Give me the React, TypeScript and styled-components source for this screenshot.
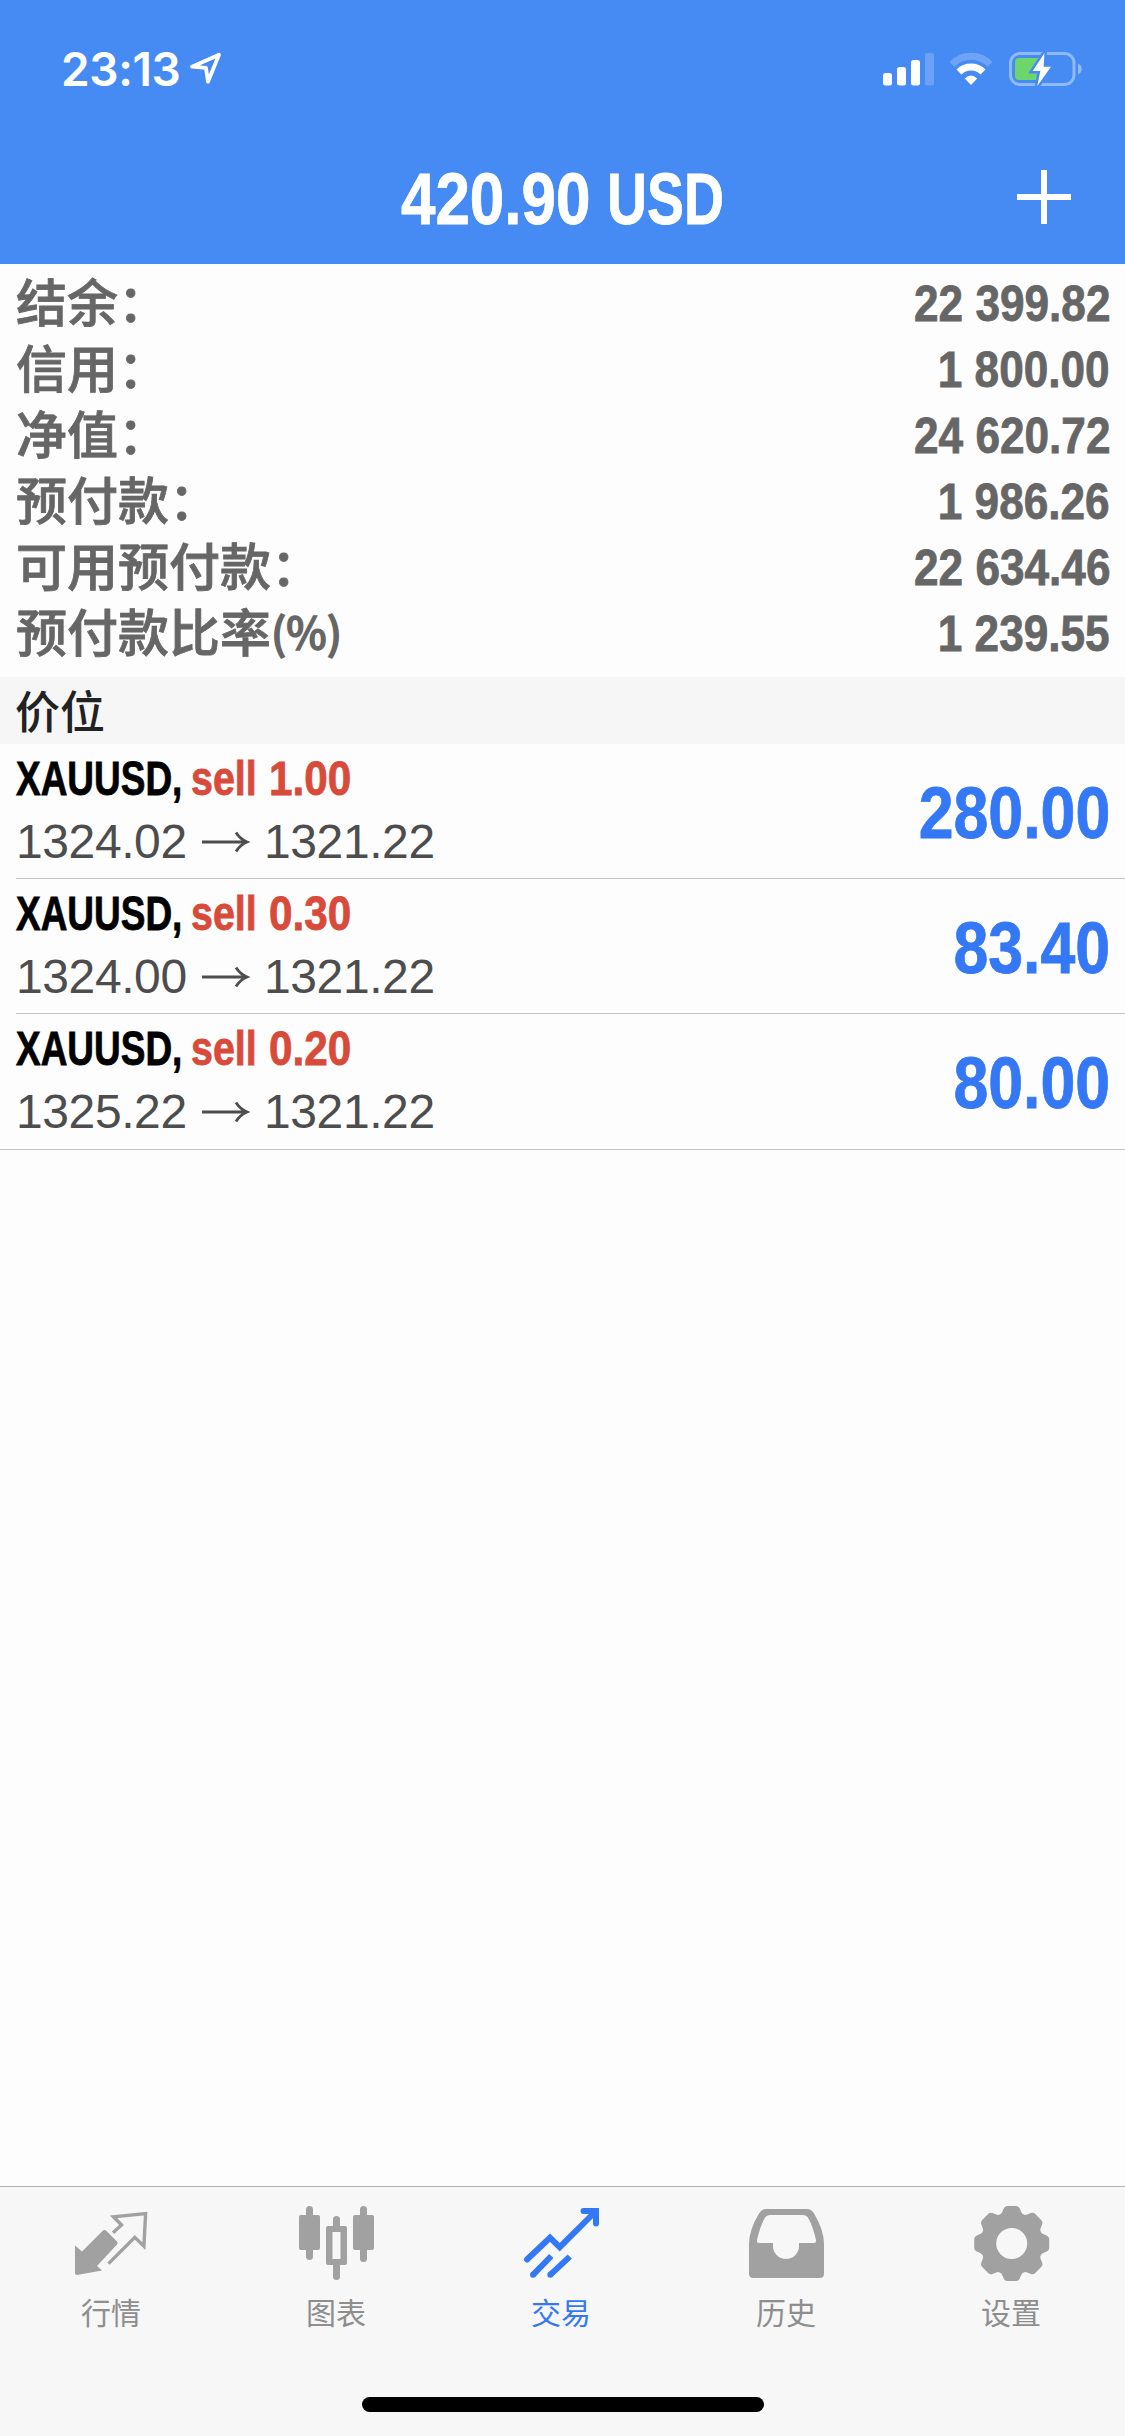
import React from "react";
import styled, { createGlobalStyle } from "styled-components";

const GlobalStyle = createGlobalStyle`
  * { box-sizing: border-box; }
  body { margin: 0; background: #fdfdfd; }
  svg { display: block; overflow: visible; flex: none; }
`;

const BLUE = "#3478f6";
const HEADER = "#468bf4";
const LATIN = `"Liberation Sans", "Noto Sans CJK SC", sans-serif`;
const CJK = `"Noto Sans CJK SC", "Liberation Sans", sans-serif`;

const Screen = styled.div`
  width: 1125px;
  height: 2436px;
  display: flex;
  flex-direction: column;
  background: #fdfdfd;
  font-family: ${LATIN};
`;

const Header = styled.header`
  height: 264px;
  background: ${HEADER};
  color: #fff;
`;

const StatusBar = styled.div`
  height: 132px;
  padding: 6px 43px 0 61px;
  display: flex;
  align-items: center;
  justify-content: space-between;
`;

const StatusGroup = styled.div<{ $gap: number }>`
  display: flex;
  align-items: center;
  gap: ${(p) => p.$gap}px;
`;

const Clock = styled.span`
  font: 600 46px/60px Inter, sans-serif;
  letter-spacing: -0.4px;
`;

const NavBar = styled.div`
  height: 132px;
  padding: 0 54px;
  display: grid;
  grid-template-columns: 1fr auto 1fr;
  align-items: center;
`;

const Title = styled.h1`
  grid-column: 2;
  margin: 0;
  padding-top: 2px;
  display: flex;
  font-size: 72px;
  line-height: 80px;
  font-weight: 700;
`;

const AddButton = styled.button`
  justify-self: end;
  padding: 0 0 2px;
  border: 0;
  background: none;
`;

/* Bold text squeezed to a condensed cut; the box takes the squeezed width. */
const Condensed = styled.span<{ $scale: number; $width: number; $color?: string }>`
  display: inline-block;
  width: ${(p) => p.$width}px;
  white-space: nowrap;
  font-weight: 700;
  -webkit-text-stroke: 0.8px currentColor;
  color: ${(p) => p.$color ?? "inherit"};
  transform: scaleX(${(p) => p.$scale});
  transform-origin: left center;
`;

const CondensedEnd = styled.span<{ $scale: number }>`
  display: inline-block;
  white-space: nowrap;
  font-weight: 700;
  -webkit-text-stroke: 0.8px currentColor;
  transform: scaleX(${(p) => p.$scale});
  transform-origin: right center;
`;

const Summary = styled.section`
  padding: 6px 15px 11px 16px;
  color: #666;
`;

const SummaryRow = styled.div`
  height: 66px;
  display: flex;
  align-items: flex-start;
  justify-content: space-between;
  font-size: 50px;
  line-height: 68px;
`;

const SummaryLabel = styled.span`
  display: flex;
  align-items: flex-start;
  font: 500 51px/60px ${CJK};
  -webkit-text-stroke: 0.8px currentColor;
`;

const Unit = styled.span`
  font-size: 43px;
  -webkit-text-stroke: 1.4px currentColor;
`;

const SectionTitle = styled.h2`
  margin: 0;
  height: 67px;
  padding-left: 15px;
  background: #f6f6f6;
  color: #222;
  font: 500 45px/65px ${CJK};
`;

const List = styled.div`
  height: 406px;
  border-bottom: 1px solid #c2c2c6;
`;

const Position = styled.div<{ $last: boolean }>`
  height: 135px;
  margin-left: 16px;
  padding-right: 15px;
  display: flex;
  align-items: center;
  justify-content: space-between;
  border-bottom: 1px solid ${(p) => (p.$last ? "transparent" : "#c2c2c6")};
`;

const Details = styled.div`
  padding-bottom: 3px;
  display: flex;
  flex-direction: column;
`;

const Symbol = styled.div`
  height: 63px;
  display: flex;
  font-size: 48px;
  line-height: 63px;
  color: #000;
`;

const Prices = styled.div`
  height: 63px;
  display: flex;
  align-items: center;
  font-size: 48px;
  line-height: 63px;
  letter-spacing: -0.4px;
  color: #4d4d4d;
`;

const Price = styled.span`
  width: 186px;
  white-space: nowrap;
`;

const ArrowSlot = styled.span`
  width: 62px;
  padding-top: 2px;
`;

const Profit = styled.div`
  padding-top: 4px;
  font-size: 72px;
  line-height: 80px;
  color: ${BLUE};
`;

const Spacer = styled.div`
  flex: 1;
`;

const Footer = styled.footer`
  height: 250px;
  border-top: 1px solid #b0b0b0;
  background: #f7f7f7;
  display: flex;
  flex-direction: column;
  align-items: center;
  justify-content: space-between;
  padding-bottom: 24px;
`;

const Tabs = styled.nav`
  width: 100%;
  display: grid;
  grid-template-columns: repeat(5, 1fr);
`;

const Tab = styled.div<{ $active?: boolean }>`
  padding-top: 19px;
  display: flex;
  flex-direction: column;
  align-items: center;
  color: ${(p) => (p.$active ? BLUE : "#a1a1a1")};
`;

const TabLabel = styled.span<{ $active?: boolean }>`
  margin-top: 8px;
  padding-right: 3px;
  color: ${(p) => (p.$active ? BLUE : "#8e8e8e")};
  font: 400 30px/44px ${CJK};
`;

const HomeIndicator = styled.div`
  width: 402px;
  height: 15px;
  border-radius: 8px;
  background: #000;
`;

const LocationIcon = () => (
  <svg width="32" height="32" viewBox="0 0 32 32">
    <path d="M29 1.700 2 13.700l14 1.200 2 13.800z" fill="none" stroke="#fff" strokeWidth="3.800" strokeLinejoin="round" />
  </svg>
);

const SignalIcon = () => (
  <svg width="51" height="33" viewBox="0 0 51 33" fill="#fff">
    <rect x="0" y="20" width="9" height="12.5" rx="2.5" />
    <rect x="14" y="14" width="9" height="18.5" rx="2.5" />
    <rect x="28" y="7" width="9" height="25.5" rx="2.5" />
    <rect x="42" y="0" width="9" height="32.5" rx="2.5" opacity="0.2" />
  </svg>
);

const WifiIcon = () => (
  <svg width="45" height="34" viewBox="0 0 45 34" fill="none" stroke="#fff" strokeWidth="7">
    <path d="M3 12.3A26.5 26.5 0 0 1 41 12.3" opacity="0.22" />
    <path d="M10 20A17 17 0 0 1 34 20" />
    <path d="M15.8 26.4Q22 20.6 28.2 26.4L22 33z" fill="#fff" stroke="none" />
  </svg>
);

const BatteryIcon = () => (
  <svg width="73" height="34" viewBox="0 0 73 34">
    <rect x="1.5" y="1.5" width="63.5" height="31" rx="9.5" fill="none" stroke="#fff" strokeOpacity="0.4" strokeWidth="3" />
    <path d="M69 11.5c5 2 5 9 0 11z" fill="#fff" opacity="0.4" />
    <path d="M10 6H31V28H10a4 4 0 0 1-4-4V10a4 4 0 0 1 4-4z" fill="#6cd66b" />
    <path
      d="M35.5 1 23.7 19h7.6L28.3 34 42 14.8H34.6z"
      fill="#fff"
      stroke={HEADER}
      strokeWidth="5"
      paintOrder="stroke"
    />
  </svg>
);

const PlusIcon = () => (
  <svg width="54" height="54" viewBox="0 0 54 54" fill="#fff">
    <rect x="24" width="6" height="54" />
    <rect y="24" width="54" height="6" />
  </svg>
);

const RightArrow = () => (
  <svg width="46" height="22" viewBox="0 0 46 22" fill="none" stroke="#4d4d4d" strokeWidth="2.800">
    <path d="M0 11H44M34 1.5Q38 8 45 11Q38 14 34 20.5" />
  </svg>
);

const QuotesIcon = () => (
  <svg width="75" height="75" viewBox="0 0 75 75">
    <path
      d="M0 39.6 7 45.4 27.5 25Q29.5 23 31.5 25L42 35.5Q43.3 37 42 38.6L22 60 27 64.6 2 69Q0 69 0 67z"
      fill="currentColor"
    />
    <path
      d="M38 26.8 46.5 19 38.5 10.8 70.6 7.6 68.9 40.2 59.8 31.3 33.5 57.6"
      fill="none"
      stroke="currentColor"
      strokeWidth="3.4"
    />
  </svg>
);

const ChartsIcon = () => (
  <svg width="75" height="75" viewBox="0 0 75 75" fill="currentColor">
    <rect x="6" y="0" width="7" height="54" rx="3.5" />
    <rect x="-1" y="9" width="21" height="35" rx="2" />
    <rect x="60" y="0" width="7" height="56" rx="3.5" />
    <rect x="53" y="9" width="21" height="35" rx="2" />
    <path d="M33 21V13.500a3.500 3.500 0 0 1 7 0V21z" />
    <path d="M33 58V70.500a3.500 3.500 0 0 0 7 0V58z" />
    <path fillRule="evenodd" d="M28 20H45a2 2 0 0 1 2 2V57a2 2 0 0 1-2 2H28a2 2 0 0 1-2-2V22a2 2 0 0 1 2-2zM32.5 26V53H40.5V26z" />
  </svg>
);

const TradeIcon = () => (
  <svg width="75" height="75" viewBox="0 0 75 75" fill="none" stroke="currentColor" strokeWidth="6">
    <path d="M2 53.5 25 31.7 34.7 41.2 70 6" strokeLinecap="round" />
    <path d="M58.5 5H71V17.5" strokeLinecap="round" />
    <path d="M26.3 50 8 68.8M44.8 50.6 25.3 68.8" />
    <circle cx="8" cy="68.8" r="3" fill="currentColor" stroke="none" />
    <circle cx="25.3" cy="68.8" r="3" fill="currentColor" stroke="none" />
  </svg>
);

const HistoryIcon = () => (
  <svg width="75" height="75" viewBox="0 0 75 75" fill="currentColor">
    <path
      fillRule="evenodd"
      d="M16 3H57Q61.500 3 64 7.500Q74 24 74 38V67.500Q74 72 69.500 72H3.500Q-1 72-1 67.500V38Q-1 24 9 7.500Q11.500 3 16 3zM20.500 9Q16.500 9 14.700 12.200Q10 20.500 7 34Q6.500 37 9 37H23V40a13 13 0 0 0 26 0V37H64Q66.500 37 66 34Q63 20.500 58.300 12.200Q56.500 9 52.500 9z"
    />
  </svg>
);

const TEETH = [0, 45, 90, 135, 180, 225, 270, 315];

const SettingsIcon = () => (
  <svg width="75" height="75" viewBox="0 0 75 75">
    <g transform="translate(36.700 37.500)">
      <circle r="22.500" fill="none" stroke="currentColor" strokeWidth="14" />
      {TEETH.map((angle) => (
        <path
          key={angle}
          transform={`rotate(${angle})`}
          fill="currentColor"
          d="M-12-24V-29Q-10.500-29.200-9.500-31.500L-8-35Q-7-37.500-4.500-37.500H4.500Q7-37.500 8-35L9.500-31.500Q10.500-29.200 12-29V-24z"
        />
      ))}
    </g>
  </svg>
);

const summary = [
  { label: "结余：", value: "22 399.82" },
  { label: "信用：", value: "1 800.00" },
  { label: "净值：", value: "24 620.72" },
  { label: "预付款：", value: "1 986.26" },
  { label: "可用预付款：", value: "22 634.46" },
  { label: "预付款比率", unit: "(%)", value: "1 239.55" },
];

const positions = [
  { symbol: "XAUUSD,", side: "sell", volume: "1.00", open: "1324.02", current: "1321.22", profit: "280.00" },
  { symbol: "XAUUSD,", side: "sell", volume: "0.30", open: "1324.00", current: "1321.22", profit: "83.40" },
  { symbol: "XAUUSD,", side: "sell", volume: "0.20", open: "1325.22", current: "1321.22", profit: "80.00" },
];

const tabs = [
  { label: "行情", Icon: QuotesIcon },
  { label: "图表", Icon: ChartsIcon },
  { label: "交易", Icon: TradeIcon, active: true },
  { label: "历史", Icon: HistoryIcon },
  { label: "设置", Icon: SettingsIcon },
];

const RED = "#d84a3a";

export default function App() {
  return (
    <Screen>
      <GlobalStyle />
      <Header>
        <StatusBar>
          <StatusGroup $gap={10}>
            <Clock>23:13</Clock>
            <LocationIcon />
          </StatusGroup>
          <StatusGroup $gap={15}>
            <SignalIcon />
            <WifiIcon />
            <BatteryIcon />
          </StatusGroup>
        </StatusBar>
        <NavBar>
          <Title>
            <Condensed $scale={0.86} $width={206}>420.90</Condensed>
            <Condensed $scale={0.77} $width={117}>USD</Condensed>
          </Title>
          <AddButton aria-label="+">
            <PlusIcon />
          </AddButton>
        </NavBar>
      </Header>

      <Summary>
        {summary.map((row) => (
          <SummaryRow key={row.label}>
            <SummaryLabel>
              {row.label}
              {row.unit && <Unit>{row.unit}</Unit>}
            </SummaryLabel>
            <CondensedEnd $scale={0.883}>{row.value}</CondensedEnd>
          </SummaryRow>
        ))}
      </Summary>

      <SectionTitle>价位</SectionTitle>
      <List>
        {positions.map((p, i) => (
          <Position key={p.volume} $last={i === positions.length - 1}>
            <Details>
              <Symbol>
                <Condensed $scale={0.77} $width={175}>{p.symbol}</Condensed>
                <Condensed $scale={0.82} $width={78} $color={RED}>{p.side}</Condensed>
                <Condensed $scale={0.88} $width={84} $color={RED}>{p.volume}</Condensed>
              </Symbol>
              <Prices>
                <Price>{p.open}</Price>
                <ArrowSlot>
                  <RightArrow />
                </ArrowSlot>
                <Price>{p.current}</Price>
              </Prices>
            </Details>
            <Profit>
              <CondensedEnd $scale={0.87}>{p.profit}</CondensedEnd>
            </Profit>
          </Position>
        ))}
      </List>

      <Spacer />

      <Footer>
        <Tabs>
          {tabs.map(({ label, Icon, active }) => (
            <Tab key={label} $active={active}>
              <Icon />
              <TabLabel $active={active}>{label}</TabLabel>
            </Tab>
          ))}
        </Tabs>
        <HomeIndicator />
      </Footer>
    </Screen>
  );
}
